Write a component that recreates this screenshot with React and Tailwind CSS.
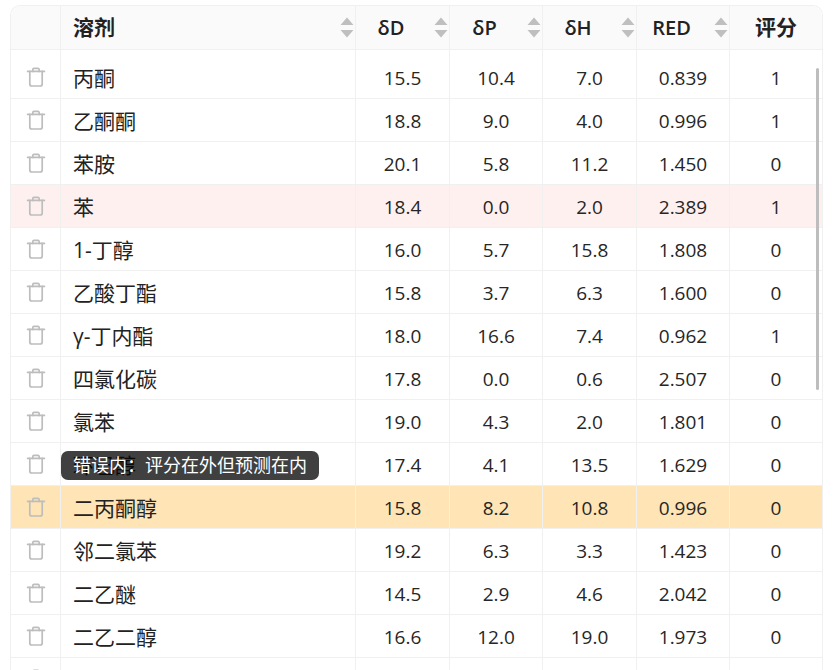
import React from "react";

const rows = [
  ["丙酮", "15.5", "10.4", "7.0", "0.839", "1"],
  ["乙酮酮", "18.8", "9.0", "4.0", "0.996", "1"],
  ["苯胺", "20.1", "5.8", "11.2", "1.450", "0"],
  ["苯", "18.4", "0.0", "2.0", "2.389", "1"],
  ["1-丁醇", "16.0", "5.7", "15.8", "1.808", "0"],
  ["乙酸丁酯", "15.8", "3.7", "6.3", "1.600", "0"],
  ["γ-丁内酯", "18.0", "16.6", "7.4", "0.962", "1"],
  ["四氯化碳", "17.8", "0.0", "0.6", "2.507", "0"],
  ["氯苯", "19.0", "4.3", "2.0", "1.801", "0"],
  ["环己醇", "17.4", "4.1", "13.5", "1.629", "0"],
  ["二丙酮醇", "15.8", "8.2", "10.8", "0.996", "0"],
  ["邻二氯苯", "19.2", "6.3", "3.3", "1.423", "0"],
  ["二乙醚", "14.5", "2.9", "4.6", "2.042", "0"],
  ["二乙二醇", "16.6", "12.0", "19.0", "1.973", "0"],
  ["", "", "", "", "", ""],
];

const widths = ["w-[94px]", "w-[93px]", "w-[94px]", "w-[93px]", "w-[93px]"];

function Trash() {
  return (
    <svg width="20" height="20" viewBox="0 0 20 20" fill="none" stroke="#bdbdbd" strokeWidth="1.7" strokeLinecap="round" strokeLinejoin="round">
      <path d="M1.6 4.4h16.8" />
      <path d="M3.8 4.4v12.6a2 2 0 0 0 2 2h8.4a2 2 0 0 0 2-2V4.4" />
      <path d="M6.8 4.4V2.6a1.2 1.2 0 0 1 1.2-1.2h4a1.2 1.2 0 0 1 1.2 1.2v1.8" />
    </svg>
  );
}

function Sort() {
  return (
    <svg width="14" height="21" viewBox="0 0 14 21" className="mr-[1px] shrink-0" fill="#bfbfbf">
      <path d="M7 0.5 13.5 8H0.5z" />
      <path d="M7 20.5 13.5 13H0.5z" />
    </svg>
  );
}

function Head({ label, w }) {
  return (
    <div className={`${w} flex items-center border-l border-[#f0f0f0]`}>
      <span className="mr-[8px] flex-1 pt-px text-center text-[20px] font-semibold text-[#222]">{label}</span>
      <Sort />
    </div>
  );
}

function Row({ r, i }) {
  const bg = i === 3 ? "bg-[#fff0f0]" : i === 10 ? "bg-[#ffe4b5]" : "bg-white";
  const h = i === 0 ? "h-[49px]" : "h-[43px]";
  const pad = i === 0 ? "pt-[6px]" : "";
  const textPad = i === 0 ? "pt-[9px]" : "pt-[3px]";
  return (
    <div className={`flex ${h} ${bg} border-b border-[#f0f0f0]`}>
      <div className={`flex w-[49px] items-center justify-center ${pad}`}>
        <Trash />
      </div>
      <div className={`flex w-[295px] items-center border-l border-[#f0f0f0] pl-[12px] text-[21px] text-[#222] ${textPad}`}>{r[0]}</div>
      {r.slice(1, 6).map((v, k) => (
        <div key={k} className={`${widths[k]} flex items-center justify-center border-l border-[#f0f0f0] text-[19px] text-[#262626] ${textPad}`}>
          {v}
        </div>
      ))}
    </div>
  );
}

export default function App() {
  return (
    <div
      className="h-[670px] w-[838px] overflow-hidden bg-white pl-[10px] pt-[5px]"
      style={{ fontFamily: '"Open Sans", "Noto Sans CJK SC", sans-serif' }}
    >
      <div className="relative w-[813px] rounded-t-[10px] border-x border-t border-[#f0f0f0]">
        <div className="flex h-[44px] rounded-t-[10px] border-b border-[#f0f0f0] bg-[#fafafa]">
          <div className="w-[49px]" />
          <div className="flex w-[295px] items-center border-l border-[#f0f0f0] pl-[12px]">
            <span className="flex-1 pt-px text-[21px] font-bold text-[#222]">溶剂</span>
            <Sort />
          </div>
          <Head label="δD" w={widths[0]} />
          <Head label="δP" w={widths[1]} />
          <Head label="δH" w={widths[2]} />
          <Head label="RED" w={widths[3]} />
          <div className={`${widths[4]} flex items-center justify-center border-l border-[#f0f0f0] pt-px text-[21px] font-bold text-[#222]`}>
            评分
          </div>
        </div>
        {rows.map((r, i) => (
          <Row key={i} r={r} i={i} />
        ))}
        <div className="absolute left-[805px] top-[62px] h-[322px] w-[3px] rounded-full bg-[#bdbdbd]" />
        <div className="absolute left-[50px] top-[445px] flex h-[29px] w-[258px] items-center justify-center rounded-[7px] bg-black/75 text-[18px] text-white">
          错误内：评分在外但预测在内
        </div>
      </div>
    </div>
  );
}
